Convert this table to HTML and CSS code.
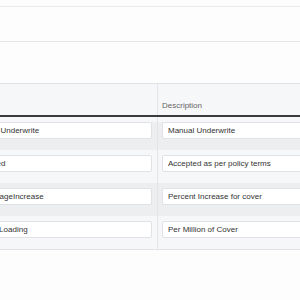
FILE: index.html
```html
<!DOCTYPE html>
<html lang="en">
<head>
    <meta charset="UTF-8">
    <meta name="viewport" content="width=device-width, initial-scale=1.0">
    <title>Decision Codes</title>
    <link rel="stylesheet" href="styles.css">
</head>
<body>
    <div class="top-strip"></div>
    <div class="toolbar"></div>
    <div class="grid-area">
        <div class="grid">
            <div class="row head">
                <div class="cell"></div>
                <div class="cell">Description</div>
            </div>
            <div class="row">
                <div class="cell"><input type="text" value="Manual Underwrite"></div>
                <div class="cell"><input type="text" value="Manual Underwrite"></div>
            </div>
            <div class="row">
                <div class="cell"><input type="text" value="Accepted"></div>
                <div class="cell"><input type="text" value="Accepted as per policy terms"></div>
            </div>
            <div class="row">
                <div class="cell"><input type="text" value="PercentageIncrease"></div>
                <div class="cell"><input type="text" value="Percent Increase for cover"></div>
            </div>
            <div class="row">
                <div class="cell"><input type="text" value="PerMileLoading"></div>
                <div class="cell"><input type="text" value="Per Million of Cover"></div>
            </div>
        </div>
    </div>
</body>
</html>
```

FILE: styles.css
```css
body {
    font-family: "Liberation Sans", Arial, sans-serif;
    font-size: 8px;
    margin: 0;
    padding: 0;
    background-color: #fdfdfd;
    overflow: hidden;
}
.top-strip {
    height: 6px;
    border-bottom: 1px solid #ebebec;
}
.toolbar {
    height: 34px;
    border-bottom: 1px solid #e6e6e7;
}
.grid-area {
    padding-top: 41px;
}
.grid {
    margin-left: -38px;
    width: 400px;
    border-top: 1px solid #e1e3e6;
    border-bottom: 1px solid #e1e3e6;
}
.row {
    display: flex;
}
.cell {
    flex: 0 0 195px;
    box-sizing: border-box;
    padding: 5px 5px 11px 4px;
}
.cell + .cell {
    flex: 1;
    border-left: 1px solid #e3e5e8;
}
.head {
    height: 31px;
    background-color: #f6f7f9;
    border-bottom: 2px solid #3a3a3a;
    color: #666;
    line-height: 10px;
}
.head .cell {
    display: flex;
    align-items: flex-end;
    padding: 0 4px 4px 4px;
}
.row:nth-child(even) {
    background-color: #eceef0;
}
.row:nth-child(odd) {
    background-color: #f6f7f9;
}
.row:nth-child(2) .cell {
    box-shadow: inset 0 5px 0 #f6f7f9;
}
input[type="text"] {
    display: block;
    width: 100%;
    height: 17px;
    box-sizing: border-box;
    margin: 0;
    padding: 0 5px;
    border: 1px solid #e0e2e6;
    border-radius: 2px;
    background-color: #fff;
    font-family: "Liberation Sans", Arial, sans-serif;
    font-size: 8px;
    color: #333;
}
```
